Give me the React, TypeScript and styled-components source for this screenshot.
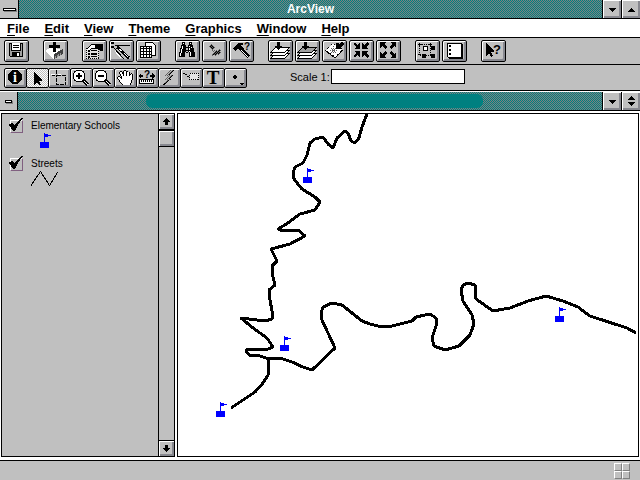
import React from "react";
import styled, { createGlobalStyle, css } from "styled-components";

const GRAY = "#c0c0c0";
const DITHER = "repeating-conic-gradient(#808080 0 25%, #008080 0 50%) 0 0 / 2px 2px";
const BEVEL = "inset 1px 1px #ffffff, inset -2px -2px #87888f";

const GlobalStyle = createGlobalStyle`
  *, *::before, *::after { box-sizing: border-box; }
  body {
    margin: 0;
    background: #ffffff;
    color: #000000;
    font-family: "Liberation Sans", Arial, sans-serif;
  }
  button { font: inherit; color: inherit; padding: 0; margin: 0; }
`;

const Window = styled.div`
  display: flex;
  flex-direction: column;
  min-height: 100vh;
`;

const TitleBar = styled.header`
  display: flex;
  align-items: stretch;
  height: 19px;
  border-bottom: 1px solid #000;
  background: ${DITHER};
`;

const Title = styled.h1`
  flex: 1;
  margin: 0;
  color: #fff;
  font-size: 12px;
  font-weight: bold;
  line-height: 18px;
  text-align: center;
`;

const SystemButton = styled.button<{ $child?: boolean }>`
  display: flex;
  align-items: center;
  justify-content: center;
  width: ${(p) => (p.$child ? 18 : 19)}px;
  border: 0;
  border-right: 1px solid #000;
  background: ${GRAY};

  &::before {
    content: "";
    width: ${(p) => (p.$child ? 7 : 13)}px;
    height: 3px;
    border: 1px solid #000;
    background: #fff;
    box-shadow: 1px 1px #808080;
  }
`;

const SizeButton = styled.button`
  display: flex;
  align-items: center;
  justify-content: center;
  width: 19px;
  border: 0;
  border-left: 1px solid #000;
  background: ${GRAY};
  box-shadow: ${BEVEL};
`;

const MenuBar = styled.nav`
  display: flex;
  gap: 15px;
  height: 19px;
  padding: 1px 7px 0;
  border-bottom: 1px solid #000;
  background: #fff;
`;

const MenuItem = styled.button`
  border: 0;
  background: none;
  font-size: 13px;
  font-weight: bold;
  line-height: 17px;

  &::first-letter {
    text-decoration: underline;
    text-underline-offset: 2px;
  }
`;

const ToolStrip = styled.div<{ $tools?: boolean }>`
  display: flex;
  align-items: flex-start;
  gap: ${(p) => (p.$tools ? 43 : 14)}px;
  height: ${(p) => (p.$tools ? 26 : 27)}px;
  padding: ${(p) => (p.$tools ? 3 : 2)}px 4px 0;
  border-bottom: 1px solid #000;
  background: ${GRAY};
`;

const ButtonGroup = styled.div<{ $joined?: boolean }>`
  display: flex;
  gap: ${(p) => (p.$joined ? 0 : 2)}px;
  ${(p) =>
    p.$joined &&
    css`
      & > button + button { margin-left: -1px; }
    `}
`;

const ToolButton = styled.button<{ $small?: boolean; $pressed?: boolean }>`
  display: flex;
  width: ${(p) => (p.$small ? 23 : 25)}px;
  height: ${(p) => (p.$small ? 20 : 22)}px;
  border: 1px solid #000;
  border-radius: 2px;
  background: ${(p) =>
    p.$pressed ? "repeating-conic-gradient(#ffffff 0 25%, #c0c0c0 0 50%) 0 0 / 2px 2px" : GRAY};
  box-shadow: ${(p) => (p.$pressed ? "none" : BEVEL)};
`;

const ScaleLabel = styled.label`
  display: flex;
  align-items: center;
  gap: 1px;
  height: 17px;
  font-size: 11px;
  white-space: pre;
`;

const ScaleInput = styled.input`
  width: 134px;
  height: 15px;
  padding: 0 3px;
  border: 1px solid #000;
  border-radius: 0;
  background: #fff;
  font: 11px "Liberation Sans", Arial, sans-serif;
  outline: 0;
`;

const ChildTitleBar = styled(TitleBar)`
  height: 20px;
  border-top: 1px solid #fff;
`;

const ChildTitleSpace = styled.div`
  display: flex;
  flex: 1;
  padding: 2px 119px 2px 128px;
`;

const ChildTitle = styled.div`
  flex: 1;
  border-radius: 6px;
  background: #008080;
`;

const Workspace = styled.main`
  display: grid;
  grid-template-columns: 174px 1fr;
  gap: 2px;
  flex: 1;
  padding: 2px 1px 3px;
  background: #fff;
`;

const Contents = styled.section`
  display: flex;
  border: 1px solid #000;
  background: ${GRAY};
`;

const ThemeList = styled.ul`
  display: flex;
  flex-direction: column;
  flex: 1;
  gap: 8px;
  margin: 0;
  padding: 3px 6px;
  list-style: none;
`;

const ThemeItem = styled.li`
  display: flex;
  flex-direction: column;
  height: 30px;
`;

const ThemeLabel = styled.label`
  display: flex;
  align-items: center;
  gap: 6px;
  height: 16px;
  font-size: 10px;
  line-height: 16px;
`;

const ThemeName = styled.span`
  padding-top: 2px;
`;

const CheckCell = styled.span`
  display: grid;
  width: 17px;
  height: 16px;

  & > * { grid-area: 1 / 1; }
`;

const CheckInput = styled.input`
  appearance: none;
  align-self: end;
  width: 13px;
  height: 13px;
  margin: 0 0 0 2px;
  border: 1px solid;
  border-color: #fff #806080 #806080 #fff;
  background: ${GRAY};

  &:not(:checked) + svg { visibility: hidden; }
`;

const Drawing = styled.svg`
  display: block;
  flex: none;
  overflow: visible;
  pointer-events: none;
  shape-rendering: crispEdges;
`;

const Symbol = styled(Drawing)<{ $wide?: boolean }>`
  margin: ${(p) => (p.$wide ? "0 0 0 23px" : "0 0 0 32px")};
`;

const ScrollBar = styled.div`
  display: flex;
  flex-direction: column;
  width: 16px;
  border-left: 1px solid #000;
`;

const ScrollButton = styled.button<{ $thumb?: boolean; $end?: boolean }>`
  display: flex;
  align-items: center;
  justify-content: center;
  height: 16px;
  border: 0 solid #000;
  border-top-width: ${(p) => (p.$thumb || p.$end ? 1 : 0)}px;
  border-bottom-width: ${(p) => (p.$end ? 0 : 1)}px;
  ${(p) => p.$thumb && "height: 17px;"}
  ${(p) => p.$end && "margin-top: auto;"}
  background: ${GRAY};
  box-shadow: ${BEVEL};
`;

const MapFrame = styled.section`
  display: flex;
  min-width: 0;
  border: 1px solid #000;
  background: #fff;
`;

const MapDrawing = styled.svg`
  flex: 1;
  min-width: 0;
  height: auto;
  shape-rendering: crispEdges;
`;

const StatusBar = styled.footer`
  display: flex;
  justify-content: flex-end;
  height: 20px;
  padding: 2px 10px 0;
  border-top: 1px solid #000;
  background: ${GRAY};
`;

const Grip = styled.div`
  display: grid;
  grid-template-columns: 8px 8px;
  grid-template-rows: 8px 8px;
`;

const GripCell = styled.span`
  border: 1px solid;
  border-color: #fff #808080 #808080 #fff;
  background: ${GRAY};
`;

/* Draws a monochrome bitmap: "#" is black, "o" white, "x" dark gray. */
const INK: Record<string, string> = { "#": "#000", o: "#fff", x: "#606060" };

function Bitmap({ rows, x, y }: { rows: string[]; x: number; y: number }) {
  return (
    <g>
      {rows.flatMap((row, r) =>
        (row.match(/(.)\1*/g) ?? []).reduce<{ at: number; out: React.ReactNode[] }>(
          (acc, run) => {
            if (INK[run[0]])
              acc.out.push(
                <rect key={`${r}-${acc.at}`} x={x + acc.at} y={y + r} width={run.length} height={1} fill={INK[run[0]]} />
              );
            acc.at += run.length;
            return acc;
          },
          { at: 0, out: [] }
        ).out
      )}
    </g>
  );
}

const Glyph = styled.text<{ $size: number; $serif?: boolean }>`
  font-family: ${(p) => (p.$serif ? '"Liberation Serif", "Times New Roman", serif' : '"Liberation Sans", Arial, sans-serif')};
  font-size: ${(p) => p.$size}px;
  font-weight: bold;
  text-anchor: middle;
`;

const inwardArrow = "M0 2L2 0L4 3L7 1V7H1L3 5Z";
const outwardArrow = "M0 0H6L4 2L7 5L5 7L2 4L0 6Z";

function FourArrows({ d }: { d: string }) {
  return (
    <g>
      <path d={d} transform="translate(3 1)" />
      <path d={d} transform="translate(19 1) scale(-1 1)" />
      <path d={d} transform="translate(3 17) scale(1 -1)" />
      <path d={d} transform="translate(19 17) scale(-1 -1)" />
    </g>
  );
}

function Layers({ shaded }: { shaded?: boolean }) {
  return (
    <g stroke="#000">
      <path d="M1.5 17.5L6.5 12.5H20.5L15.5 17.5Z" fill="#fff" />
      <path d="M1.5 14.5L6.5 9.5H20.5L15.5 14.5Z" fill="#fff" />
      <path d="M1.5 11.5L6.5 6.5H20.5L15.5 11.5Z" fill={shaded ? "#a0a0a0" : "#fff"} />
      <path d="M8 1H11V5H13L9.5 9L6 5H8Z" fill="#000" stroke="none" />
    </g>
  );
}

function Magnifier({ plus }: { plus?: boolean }) {
  return (
    <g>
      <path d="M12 11L17 16" stroke="#000" strokeWidth="3" />
      <path d="M13 12L17 16" stroke="#fff" />
      <circle cx="8" cy="7" r="6" fill="#fff" stroke="#000" />
      <path d={plus ? "M5 6h2V4h2v2h2v2H9v2H7V8H5Z" : "M5 6h6v2H5Z"} />
    </g>
  );
}

const icons: Record<string, React.ReactNode> = {
  save: (
    <g>
      <path d="M4.5 2.5H17.5V15.5H5.5L4.5 14.5Z" fill="#a0a0a0" stroke="#000" />
      <path d="M7 2H15V9H7Z" fill="#fff" />
      <path d="M6.5 2V9.5H15.5V2M8 4.5H14M8 6.5H14" fill="none" stroke="#000" />
      <path d="M7 11H15V16H7Z" />
      <path d="M12 12H14V15H12Z" fill="#fff" />
    </g>
  ),
  addTheme: (
    <g>
      <path d="M2 9L8 6L18 9L10 14Z" fill="#fff" />
      <path d="M2 9V11L10 18V13Z" fill="#fff" />
      <path d="M10 13L19 8V13L10 18Z" fill="#404040" />
      <path d="M11 15.5L18 11.5M11 17L18 13" stroke="#909090" strokeDasharray="1 1" />
      <path d="M9 1H12V4H16V7H12V11H9V7H5V4H9Z" />
    </g>
  ),
  properties: (
    <g>
      <path d="M3 7H16V18H3Z" fill="#e0e0e0" />
      <path d="M3.5 7V18M3 17.5H16M15.5 8V18" stroke="#000" strokeDasharray="1 1" />
      <path d="M5 9h2v2H5ZM5 12h2v2H5ZM5 15h2v2H5ZM8 9h6v1H8ZM8 12h6v2H8ZM8 15h6v1H8Z" />
      <path d="M3.5 8.5L8.5 3.5H13.5V7.5H8.5L6.5 9.5" fill="#fff" stroke="#000" />
      <path d="M12 3H20V10H17L15 8H12Z" />
    </g>
  ),
  editLegend: (
    <g>
      <path d="M1 1h3v2H1ZM1 5h3v2H1ZM5 4H20V5H5Z" />
      <path d="M3 6L14 18" stroke="#000" />
      <path d="M7 6L19 17" stroke="#000" strokeWidth="3" />
      <path d="M9 8L12 10M14 12L18 16" stroke="#fff" />
      <path d="M5 10L11 17" stroke="#fff" />
    </g>
  ),
  table: (
    <g>
      <path d="M8.5 1.5H15.5L18.5 4.5V14.5H8.5Z" fill="#fff" stroke="#000" />
      <path d="M3.5 5.5H14.5V16.5H3.5Z" fill="#fff" stroke="#000" />
      <path d="M3 7.5H15M3 10.5H15M3 13.5H15M6.5 6V17M9.5 6V17M12.5 6V17" stroke="#000" />
    </g>
  ),
  find: (
    <Bitmap
      x={3}
      y={1}
      rows={[
        "...###....###...",
        "...#o#....#o#...",
        "...###....###...",
        "..#####..#####..",
        "..#o###..#o###..",
        "..#o########o#..",
        ".##o###..#o####.",
        ".#o####..#o####.",
        ".#o############.",
        ".#o####..#o####.",
        "##o###.##.#o####",
        "#o####....#o####",
        "#o####....#o####",
        "#o####....#o####",
        "######....######",
      ]}
    />
  ),
  locate: (
    <Bitmap
      x={5}
      y={3}
      rows={[
        "...x..........",
        "..x#x.........",
        ".x#x#x........",
        "..x#x#x.......",
        "...x#x........",
        "....x......x..",
        "....x.x.x.x#x.",
        ".....x.x#x#x..",
        "......x#x#x#x.",
        ".....x#x#x#x..",
        "....x#x#x.x...",
        "....x..x......",
      ]}
    />
  ),
  hammer: (
    <g>
      <path d="M3 7L8 2H13V4H11L14 8L11 11L8 8L5 10Z" />
      <path d="M10 7L19 16" stroke="#000" strokeWidth="4" />
      <path d="M11 9L18 16" stroke="#fff" />
      <Glyph x="17" y="9" $size={10}>?</Glyph>
    </g>
  ),
  zoomFull: <Layers />,
  zoomTheme: <Layers shaded />,
  zoomSelected: (
    <g>
      <path d="M2.5 9.5L9.5 2.5L19.5 8.5L12.5 16.5Z" fill="#fff" stroke="#000" strokeDasharray="1 1" />
      <path d="M3 10L12 17L20 9" fill="none" stroke="#000" />
      <path d="M10.5 5V13M7 9.5H15M8 7L13 12M13 7L8 12" stroke="#606060" strokeDasharray="1 1" />
      <path d="M13 8V2H15L16 3L19 1L21 3L18 6L19 8Z" />
    </g>
  ),
  zoomIn4: <FourArrows d={inwardArrow} />,
  zoomOut4: <FourArrows d={outwardArrow} />,
  selectFeatures: (
    <g>
      <path d="M3.5 3.5H14.5V14.5H3.5Z" fill="none" stroke="#000" strokeDasharray="1 1" />
      <path d="M2 3.5H6M3.5 2V6M13 3.5H16M14.5 2V5M2 13.5H5" stroke="#000" />
      <path d="M7.5 5.5H11.5V9.5H7.5Z" fill="#fff" stroke="#000" />
      <path d="M15 5h4v4h-4ZM6 13h4v4H6ZM15 13h4v4h-4Z" />
    </g>
  ),
  clearSelected: (
    <g>
      <path d="M4 2H18L20 4V18H6L4 16Z" />
      <path d="M8 3H18V16H8Z" fill="#fff" />
      <path d="M5 3h3v13H5Z" fill="#fff" />
      <path d="M6 4h2v2H6ZM6 8h2v2H6ZM6 12h2v2H6Z" />
    </g>
  ),
  help: (
    <g>
      <path d="M4 2L12 10V11H9L11 15L9 16L7 12L4 15Z" />
      <Glyph x="15" y="13" $size={13}>?</Glyph>
    </g>
  ),
  identify: (
    <g>
      <circle cx="10" cy="8" r="7" />
      <Glyph x="10" y="13" fill="#fff" $size={14} $serif>i</Glyph>
    </g>
  ),
  pointer: <path d="M7 3L15 11V12H12L14 16H12L10 13L7 16Z" />,
  vertexEdit: (
    <g>
      <path d="M7.5 6.5H16.5V15.5H7.5Z" fill="none" stroke="#000" strokeDasharray="4 1" />
      <path d="M2 5.5H6M9 5.5H12M7.5 1V4" stroke="#fff" />
      <path d="M7.5 1V5M3 6.5H6" stroke="#000" />
    </g>
  ),
  zoomIn: <Magnifier plus />,
  zoomOut: <Magnifier />,
  pan: (
    <Bitmap
      x={2}
      y={1}
      rows={[
        ".......##.......",
        "...##.#oo##.....",
        "..#oo##oo#oo#...",
        "..#oo##oo#oo#.#.",
        "...#oo#oo#oo##o#",
        "...#oo#oo#oo#oo#",
        ".##.#oooooooooo#",
        "#oo##oooooooooo#",
        "#ooo#oooooooooo#",
        ".#ooooooooooooo#",
        "..#ooooooooooo#.",
        "..#ooooooooooo#.",
        "...#oooooooooo#.",
        "....#oooooooo#..",
        ".....#ooooooo#..",
      ]}
    />
  ),
  measure: (
    <g>
      <path d="M2.5 10.5H16.5V14.5H2.5Z" fill="#fff" stroke="#000" />
      <path d="M4.5 11V13M6.5 11V13M8.5 11V13M10.5 11V13M12.5 11V13M14.5 11V13" stroke="#000" />
      <path d="M1 7L4 4V6H6V8H4V10ZM18 7L15 4V6H13V8H15V10Z" />
      <Glyph x="10" y="9" $size={10}>?</Glyph>
    </g>
  ),
  hotLink: (
    <Bitmap
      x={4}
      y={1}
      rows={[
        ".......x.x#",
        "......x.x#.",
        ".....x.x#..",
        "....x.x#...",
        "...x.x#....",
        "..x.x.x.x#.",
        ".....x.x#..",
        "....x.x#...",
        "...x.x#....",
        "..x.x.x#...",
        "....x#.....",
        "...x#......",
        "..x#.......",
        ".##........",
        "##.........",
      ]}
    />
  ),
  label: (
    <g>
      <path d="M9 4H18V11H9Z" fill="#e4e4e4" />
      <path d="M8.5 4.5H17.5V10.5H8.5Z" fill="none" stroke="#000" strokeDasharray="1 1" />
      <path d="M2 4.5H4M4 5.5H6M6 7.5H8" stroke="#000" />
    </g>
  ),
  text: <Glyph x="10" y="15" $size={19} $serif>T</Glyph>,
  draw: (
    <g>
      <path d="M9 6h2v1h1v2h-1v1H9V9H8V7h1Z" />
      <path d="M15 14h4v1h-1v1h-2v-1h-1Z" />
    </g>
  ),
};

const buttonGroups: [string, string][][] = [
  [["save", "Save Project"]],
  [["addTheme", "Add Theme"]],
  [["properties", "Theme Properties"], ["editLegend", "Edit Legend"], ["table", "Open Theme Table"]],
  [["find", "Find"], ["locate", "Locate Address"], ["hammer", "Query Builder"]],
  [
    ["zoomFull", "Zoom to Full Extent"],
    ["zoomTheme", "Zoom to Active Themes"],
    ["zoomSelected", "Zoom to Selected"],
    ["zoomIn4", "Zoom In"],
    ["zoomOut4", "Zoom Out"],
  ],
  [["selectFeatures", "Select Features Using Graphic"], ["clearSelected", "Clear Selected Features"]],
  [["help", "Help"]],
];

const tools: [string, string][] = [
  ["identify", "Identify"],
  ["pointer", "Pointer"],
  ["vertexEdit", "Select Feature"],
  ["zoomIn", "Zoom In Tool"],
  ["zoomOut", "Zoom Out Tool"],
  ["pan", "Pan"],
  ["measure", "Measure"],
  ["hotLink", "Hot Link"],
  ["label", "Label"],
  ["text", "Text"],
  ["draw", "Draw"],
];

const menus = ["File", "Edit", "View", "Theme", "Graphics", "Window", "Help"];

function SchoolFlag() {
  return <path d="M0 9H4V0H5V1H8V2H11V3H8V4H5V9H9V15H0Z" fill="#0000ff" />;
}

/* Map coordinates share one origin; the view is shifted by MAP_ORIGIN. */
const MAP_ORIGIN = "translate(-178 -114)";

const schools = [[303, 168], [280, 336], [216, 402], [555, 307]];

const streets = [
  "M367 114L362 127L359 138L355 143L351 141L348 133L345 131L337 138L333 148L328 144L323 137L315 139L310 143L307 155L303 163L295 167L293 173L294 179L302 189L315 197L320 202L315 210L300 214L288 223L278 229L283 231L298 230L305 236L290 244L271 249L277 261L272 266L273 277L275 285L269 290L270 300L273 316L272 319L265 321L241 318L253 328L267 338L273 347L268 349L247 349L246 351L249 355L260 356L269 359",
  "M269 359L280 358L292 362L303 367L312 370L335 348L321 318L321 313L323 307L332 303L342 305L352 313L362 321L370 324L382 327L392 326L412 321L416 317L430 314L436 318L437 323L432 338L434 346L445 350L459 346L470 335L474 324L472 315L463 301L461 290L463 285L468 283L475 285L476 299L493 311L510 308L528 301L546 296L563 301L578 307L590 316L627 328L636 333",
  "M269 359L268 375L263 383L255 392L231 408",
];

function Arrow({ kind }: { kind: "down" | "up" | "both" }) {
  const d = {
    down: "M0 4H7V5H6V6H5V7H4V8H3V7H2V6H1V5H0Z",
    up: "M3 4H4V5H5V6H6V7H7V8H0V7H1V6H2V5H3Z",
    both: "M3 0H4V1H5V2H6V3H7V4H0V3H1V2H2V1H3ZM0 6H7V7H6V8H5V9H4V10H3V9H2V8H1V7H0Z",
  }[kind];
  return (
    <Drawing width="7" height="11">
      <path d={d} />
    </Drawing>
  );
}

function ScrollArrow({ down }: { down?: boolean }) {
  return (
    <Drawing width="7" height="7">
      <path
        d="M3 0H4V1H5V2H6V3H7V4H5V7H2V4H0V3H1V2H2V1H3Z"
        transform={down ? "translate(0 7) scale(1 -1)" : undefined}
      />
    </Drawing>
  );
}

function ThemeEntry({ name, wide, children }: { name: string; wide?: boolean; children: React.ReactNode }) {
  return (
    <ThemeItem>
      <ThemeLabel>
        <CheckCell>
          <CheckInput type="checkbox" defaultChecked />
          <Drawing width="17" height="16">
            <path d="M1 7H3V6H5V7H6V8H7V7H8V6H9V5H10V4H11V3H12V2H13V1H15V2H14V3H13V4H12V6H11V7H10V9H9V11H8V13H7V14H5V13H4V12H3V10H2V9H1Z" />
          </Drawing>
        </CheckCell>
        <ThemeName>{name}</ThemeName>
      </ThemeLabel>
      <Symbol width="28" height="16" $wide={wide}>
        {children}
      </Symbol>
    </ThemeItem>
  );
}

export default function App() {
  return (
    <>
      <GlobalStyle />
      <Window>
        <TitleBar>
          <SystemButton aria-label="System menu" />
          <Title>ArcView</Title>
          <SizeButton aria-label="Minimize"><Arrow kind="down" /></SizeButton>
          <SizeButton aria-label="Maximize"><Arrow kind="up" /></SizeButton>
        </TitleBar>
        <MenuBar>
          {menus.map((m) => (
            <MenuItem key={m}>{m}</MenuItem>
          ))}
        </MenuBar>
        <ToolStrip>
          {buttonGroups.map((group) => (
            <ButtonGroup key={group[0][0]}>
              {group.map(([icon, label]) => (
                <ToolButton key={icon} aria-label={label}>
                  <Drawing width="23" height="20">{icons[icon]}</Drawing>
                </ToolButton>
              ))}
            </ButtonGroup>
          ))}
        </ToolStrip>
        <ToolStrip $tools>
          <ButtonGroup $joined>
            {tools.map(([icon, label]) => (
              <ToolButton key={icon} $small $pressed={icon === "pointer"} aria-label={label}>
                <Drawing width="21" height="18">{icons[icon]}</Drawing>
              </ToolButton>
            ))}
          </ButtonGroup>
          <ScaleLabel>
            Scale 1:
            <ScaleInput type="text" />
          </ScaleLabel>
        </ToolStrip>
        <ChildTitleBar as="div">
          <SystemButton $child aria-label="View system menu" />
          <ChildTitleSpace>
            <ChildTitle />
          </ChildTitleSpace>
          <SizeButton aria-label="Minimize view"><Arrow kind="down" /></SizeButton>
          <SizeButton aria-label="Restore view"><Arrow kind="both" /></SizeButton>
        </ChildTitleBar>
        <Workspace>
          <Contents>
            <ThemeList>
              <ThemeEntry name="Elementary Schools">
                <SchoolFlag />
              </ThemeEntry>
              <ThemeEntry name="Streets" wide>
                <path d="M0 14.5L9.5 0.5L18.5 14.5L26.5 1.5" fill="none" stroke="#000" />
              </ThemeEntry>
            </ThemeList>
            <ScrollBar>
              <ScrollButton aria-label="Scroll up"><ScrollArrow /></ScrollButton>
              <ScrollButton $thumb aria-label="Scroll position" />
              <ScrollButton $end aria-label="Scroll down"><ScrollArrow down /></ScrollButton>
            </ScrollBar>
          </Contents>
          <MapFrame>
            <MapDrawing role="img" aria-label="Map of streets and elementary schools">
              <g transform={MAP_ORIGIN}>
                <g fill="none" stroke="#000" strokeWidth="3" strokeLinejoin="round">
                  {streets.map((d) => (
                    <path key={d} d={d} />
                  ))}
                </g>
                {schools.map(([x, y]) => (
                  <g key={x} transform={`translate(${x} ${y})`}>
                    <SchoolFlag />
                  </g>
                ))}
              </g>
            </MapDrawing>
          </MapFrame>
        </Workspace>
        <StatusBar>
          <Grip>
            <GripCell />
            <GripCell />
            <GripCell />
            <GripCell />
          </Grip>
        </StatusBar>
      </Window>
    </>
  );
}
